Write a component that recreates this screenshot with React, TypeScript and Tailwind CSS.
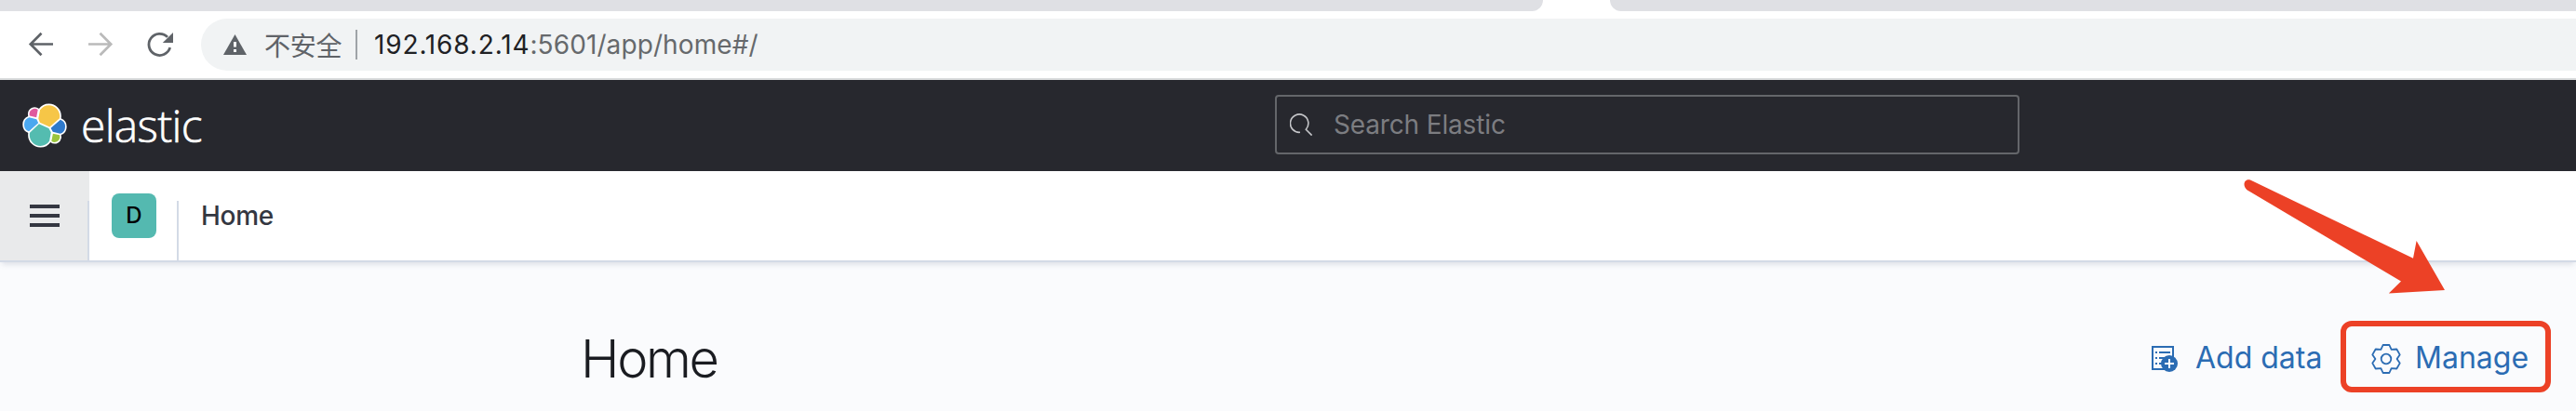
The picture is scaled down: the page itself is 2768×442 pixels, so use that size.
const GEAR =
  "M-3.4 -15 L3.4 -15 L5.6 -10.2 L11.3 -10.5 L14.7 -4.6 L11.6 0 L14.7 4.6 L11.3 10.5 L5.6 10.2 L3.4 15 L-3.4 15 L-5.6 10.2 L-11.3 10.5 L-14.7 4.6 L-11.6 0 L-14.7 -4.6 L-11.3 -10.5 L-5.6 -10.2 Z";

const LOGO = [
  ["#f6c647", "M12.58 13.787l7.002 3.211 7.066-6.213a7.849 7.849 0 0 0 .152-1.557c0-4.287-3.464-7.775-7.722-7.775a7.706 7.706 0 0 0-6.382 3.406l-1.176 6.125 1.06 2.803z"],
  ["#54bcb0", "M5.333 21.228a7.964 7.964 0 0 0-.151 1.563c0 4.3 3.482 7.796 7.762 7.796 2.576 0 4.972-1.281 6.42-3.425l1.166-6.104-1.556-2.99-7.03-3.215-6.611 6.375z"],
  ["#e05a9e", "M5.288 9.067l4.8 1.138L11.14 4.73a3.785 3.785 0 0 0-6.077 3.026c0 .447.076.893.225 1.311z"],
  ["#4ba8f0", "M4.872 10.214a5.329 5.329 0 0 0-3.564 5.042 5.33 5.33 0 0 0 3.4 4.973l6.733-6.114-1.237-2.653-5.332-1.248z"],
  ["#9bc53d", "M20.873 27.177a3.736 3.736 0 0 0 2.285.783 3.79 3.79 0 0 0 3.568-5.057l-4.796-1.128-1.057 5.402z"],
  ["#2f7acc", "M21.843 20.563l5.28 1.24a5.36 5.36 0 0 0 3.566-5.05 5.324 5.324 0 0 0-3.394-4.962l-6.905 6.083 1.453 2.689z"],
];

function ElasticLogo() {
  return (
    <svg className="h-12 w-12 shrink-0 overflow-visible" viewBox="0 0 32 32">
      {LOGO.map(([fill, d]) => (
        <path key={fill} d={d} fill="#fff" stroke="#fff" strokeWidth="2.2" strokeLinejoin="round" />
      ))}
      {LOGO.map(([fill, d]) => (
        <path key={fill} d={d} fill={fill} />
      ))}
    </svg>
  );
}

function BrowserBar() {
  return (
    <>
      <div className="flex h-3 justify-between bg-white">
        <div className="w-[1658px] rounded-br-[12px] bg-[#dfe0e4]" />
        <div className="w-[1038px] rounded-bl-[12px] bg-[#dfe0e4]" />
      </div>
      <div className="flex h-[74px] items-center border-b-2 border-[#dadcdd] bg-white pl-7">
        <svg className="h-8 w-8" viewBox="0 0 32 32" fill="none" stroke="#5f6368" strokeWidth="2.7">
          <path d="M29 15.5H4.5M16.5 3.8L4.8 15.5L16.5 27.2" />
        </svg>
        <svg className="ml-8 h-8 w-8" viewBox="0 0 32 32" fill="none" stroke="#bababa" strokeWidth="2.7">
          <path d="M3 15.5H27.5M15.5 3.8L27.2 15.5L15.5 27.2" />
        </svg>
        <svg className="ml-8 h-8 w-8" viewBox="0 0 32 32" fill="none">
          <path d="M26.7 19.2A11.6 11.6 0 1 1 24 7.9" stroke="#5f6368" strokeWidth="2.8" />
          <path d="M30 3V14H18.8Z" fill="#5f6368" />
        </svg>
        <div className="ml-7 flex h-14 flex-1 items-center rounded-l-full bg-[#f1f3f4] pl-6">
          <svg className="h-[22px] w-[25px]" viewBox="0 0 25 22">
            <path d="M12.5 0L25 22H0Z" fill="#5f6368" />
            <path d="M11 8h3v5.5h-3zM11 16h3v3h-3z" fill="#fff" />
          </svg>
          <span className="ml-[19px] w-[85px] whitespace-nowrap font-['Noto_Sans_CJK_SC',sans-serif] text-[28px] leading-8 tracking-[-0.3px] text-[#5f6368]">
            不安全
          </span>
          <span className="ml-[13px] h-8 w-0.5 bg-[#9fa3a7]" />
          <span className="ml-[18px] whitespace-nowrap text-[28px] leading-8 tracking-[0.1px] text-[#66696c]">
            <span className="tracking-[0.85px] text-[#202124]">192.168.2.14</span>:5601/app/home#/
          </span>
        </div>
      </div>
    </>
  );
}

function Header() {
  return (
    <div className="flex h-[98px] items-center bg-[#27282e] pl-6">
      <div className="flex w-[1346px] items-center">
        <ElasticLogo />
        <span className="ml-[15px] font-['Open_Sans',sans-serif] text-[48px] leading-[48px] font-light tracking-[-0.7px] text-white [-webkit-text-stroke:0.6px_#fff]">
          elastic
        </span>
      </div>
      <div className="mb-0.5 flex h-16 w-[800px] items-center rounded-[4px] border-2 border-[#64666a] pl-[14px]">
        <svg className="h-6 w-6" viewBox="0 0 24 24" fill="none" stroke="#c4c5c8" strokeWidth="1.6">
          <path d="M11 20.3A9.7 9.7 0 1 1 17.3 17.2L23.6 23.6" />
        </svg>
        <span className="ml-[23px] text-[28px] leading-8 tracking-[-0.15px] text-[#7c7d81]">Search Elastic</span>
      </div>
    </div>
  );
}

function NavBar() {
  return (
    <div className="relative flex h-[98px] border-b-2 border-[#d3dae6] bg-white shadow-[0_4px_6px_-2px_rgba(90,100,130,0.2)]">
      <div className="flex w-24 items-end justify-end bg-[#e9eaeb]">
        <div className="flex h-24 flex-1 items-center pl-8">
          <div className="flex flex-col gap-1.5">
            <span className="h-1 w-8 bg-[#343741]" />
            <span className="h-1 w-8 bg-[#343741]" />
            <span className="h-1 w-8 bg-[#343741]" />
          </div>
        </div>
        <div className="h-16 w-0.5 bg-[#d3dae6]" />
      </div>
      <div className="flex w-24 items-end">
        <div className="flex h-24 flex-1 items-center pl-6">
          <div className="flex h-12 w-12 items-center justify-center rounded-lg bg-[#54b9b0] text-[24px] font-medium text-black">
            D
          </div>
        </div>
        <div className="h-16 w-0.5 bg-[#d3dae6]" />
      </div>
      <div className="flex items-center pl-6 text-[28px] font-medium tracking-[-0.3px] text-[#343741]">Home</div>
      <svg className="absolute top-0 left-[2400px] h-36 w-60" viewBox="0 0 240 144">
        <path
          d="M18.5 9.7L193 93.7L196.6 75L227 128L166.8 131.5L180 118.5L14.5 20.2C9 16 11.5 7 18.5 9.7Z"
          fill="#ec4126"
        />
      </svg>
    </div>
  );
}

function PageHeading() {
  return (
    <div className="flex h-40 items-start bg-[#fafbfd] pt-[63px] pl-[624px]">
      <h1 className="w-[1688px] pt-[9px] text-[56px] leading-[64px] font-light tracking-[-2.3px] text-[#1a1c21]">Home</h1>
      <div className="flex h-[77px] items-center text-[32px] leading-10 text-[#2b6cb3]">
        <svg className="mt-[5px] h-7 w-7" viewBox="0 0 28 28">
          <path d="M1 1H23V25H1Z" fill="none" stroke="currentColor" strokeWidth="2" />
          <path d="M4 6h2v2H4zM8 6h12v2H8zM4 12h2v2H4zM8 12h12v2H8zM4 18h2v2H4zM8 18h12v2H8z" fill="currentColor" />
          <circle cx="19" cy="19" r="9" fill="currentColor" />
          <path d="M19 14V24M14 19H24" stroke="#fff" strokeWidth="2" />
        </svg>
        <span className="mt-0.5 ml-[19px] w-[156px] whitespace-nowrap">Add data</span>
        <div className="flex h-[77px] w-[226px] items-center rounded-[12px] border-[6px] border-[#ec4126] pl-[27px]">
          <svg className="mt-[5px] h-8 w-8 overflow-visible" viewBox="-16 -16 32 32" fill="none" stroke="currentColor" strokeWidth="1.8">
            <path d={GEAR} strokeLinejoin="round" />
            <circle r="5.3" />
          </svg>
          <span className="mt-0.5 ml-[15px] whitespace-nowrap">Manage</span>
        </div>
      </div>
    </div>
  );
}

export default function App() {
  return (
    <div className="h-[442px] w-[2768px] overflow-hidden bg-[#fafbfd] font-['Inter',sans-serif]">
      <BrowserBar />
      <Header />
      <NavBar />
      <PageHeading />
    </div>
  );
}
